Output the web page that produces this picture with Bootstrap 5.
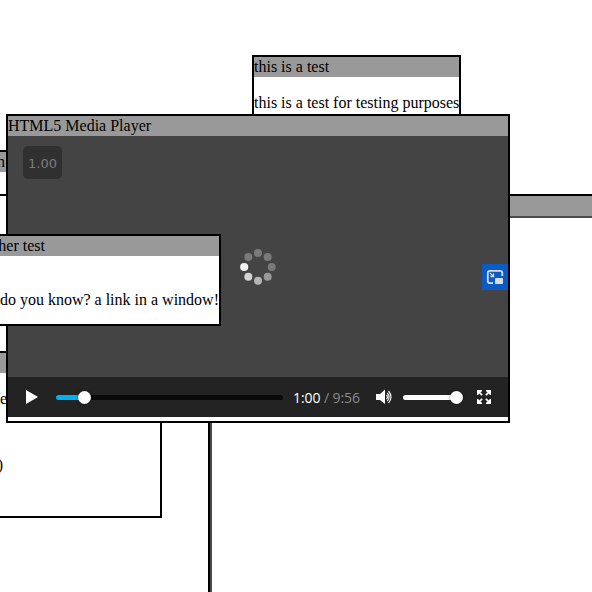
<!DOCTYPE html>
<html lang="en">
<head>
<meta charset="utf-8">
<meta name="viewport" content="width=device-width, initial-scale=1">
<title>Windows</title>
<link href="https://cdn.jsdelivr.net/npm/bootstrap@5.3.0/dist/css/bootstrap.min.css" rel="stylesheet">
<style>
body{font:16px/20px "Liberation Serif","Times New Roman",serif;color:#000;background:#fff}
.desk{width:592px;height:592px}
.win{position:absolute;border:2px solid #000;background:#fff;white-space:nowrap}
.win-title{background:#999;height:20px;line-height:20px}
.w-side{left:-200px;top:150px;width:208px;height:46px}
.w-side .win-title{padding-right:1px}
.w-frame{left:208px;top:194px;width:600px;height:600px}
.frame-body{border:2px solid #4c4c4c;height:576px}
.w-test{left:252px;top:55px;width:209px;height:90px}
.w-low{left:-238px;top:351px;width:400px;height:167px}
.w-player{left:6px;top:114px;width:504px;height:309px}
.w-link{left:-179px;top:234px;width:400px;height:92px}
.video{height:241px;background:#444;padding:10px 0 0 15px}
.speed{width:39px;height:33px;border-radius:5px;background:#303030;color:#7c7c7c;font:13px/35px "DejaVu Sans",sans-serif}
.spinner-dots{position:absolute;left:230px;top:130px}
.pip{position:absolute;right:0;top:148px;width:26px;height:26px;background:#0b5bc4}
.controls{height:40px;background:#232323;font:14px/40px "Open Sans","Noto Sans",sans-serif;color:#fff;padding-left:18px}
.track{height:5px;border-radius:3px;background:#0a0a0a}
.seek{width:227px;margin-left:18px}
.seek-fill{height:5px;border-radius:3px;background:#00b3f0}
.knob{width:13px;height:13px;border-radius:50%;background:#fff;margin-left:-7px;box-shadow:0 0 3px #0008}
.time{width:67px;margin-left:10px;letter-spacing:-.08px;padding-top:1px}
.total{color:#8b8b8b}
.volume{width:60px;margin-left:10px}
.vol-fill{width:54px;height:5px;border-radius:3px;background:#fff}
</style>
</head>
<body>
<main class="desk position-relative overflow-hidden">
  <section class="win w-side"><div class="win-title text-end">an</div></section>
  <section class="win w-frame"><div class="win-title"></div><div class="frame-body"></div></section>
  <section class="win w-test"><div class="win-title">this is a test</div><p class="m-0 pt-3">this is a test for testing purposes</p></section>
  <section class="win w-low">
    <div class="win-title"></div>
    <p class="m-0 text-end" style="padding:16px 153px 0 0">safe</p>
    <p class="m-0 text-end" style="padding:46px 157px 0 0">:)</p>
  </section>
  <section class="win w-player">
    <div class="win-title">HTML5 Media Player</div>
    <div class="video">
      <div class="speed text-center">1.00</div>
      <svg class="spinner-dots" width="40" height="40" viewBox="0 0 40 40">
        <circle cx="20" cy="7" r="4" fill="#7a7a7a"/><circle cx="29.7" cy="11" r="4" fill="#7a7a7a"/>
        <circle cx="33.7" cy="21" r="4" fill="#7a7a7a"/><circle cx="29.7" cy="30.7" r="4" fill="#999"/>
        <circle cx="20" cy="34.7" r="4" fill="#b5b5b5"/><circle cx="10.3" cy="30.7" r="4" fill="#d4d4d4"/>
        <circle cx="6.2" cy="21" r="4.1" fill="#f2f2f2"/><circle cx="10.3" cy="11" r="4" fill="#7a7a7a"/>
      </svg>
      <svg class="pip" viewBox="0 0 26 26"><path d="M20.300 12V9Q20.300 6.800 18 6.800H8Q5.800 6.800 5.800 9V17Q5.800 19.200 8 19.200H11" fill="none" stroke="#dadde2" stroke-width="1.800"/><path d="M8 9L11 12M11.500 9.500V12.500H8.500" fill="none" stroke="#dadde2" stroke-width="1.300"/><rect x="13" y="14" width="8" height="6" rx=".8" fill="#dadde2"/></svg>
    </div>
    <div class="controls d-flex align-items-center">
      <svg width="12" height="14" viewBox="0 0 12 14"><path d="M0 0L12 7L0 14Z" fill="#fff"/></svg>
      <div class="track seek d-flex align-items-center"><div class="seek-fill" style="width:29px"></div><div class="knob"></div></div>
      <div class="time">1:00<span class="total"> / 9:56</span></div>
      <svg class="ms-3" width="17" height="16" viewBox="0 0 17 16"><path d="M0 5H4L9 .5V15L4 11H0Z" fill="#fff"/><path d="M10.500 6Q12.500 8 10.500 10M11.200 3.800Q15 8 11.200 12.200M12.500 2Q17.500 8 12.500 14" fill="none" stroke="#eee" stroke-width="1.200"/></svg>
      <div class="volume d-flex align-items-center"><div class="vol-fill"></div><div class="knob"></div></div>
      <svg width="14" height="14" viewBox="0 0 14 14" fill="#fff" style="margin-left:14px"><path id="arrow" d="M0 0H5V1.200L3.400 2.200L5.700 4.500L4.500 5.700L2.200 3.400L1.200 5H0Z"/><use href="#arrow" transform="matrix(-1 0 0 1 14 0)"/><use href="#arrow" transform="matrix(1 0 0 -1 0 14)"/><use href="#arrow" transform="rotate(180 7 7)"/></svg>
    </div>
  </section>
  <section class="win w-link">
    <div class="win-title text-end" style="padding-right:174px">another test</div>
    <p class="m-0 text-end" style="padding-top:34px">what do you know? a link in a window!</p>
  </section>
</main>
<script src="https://cdn.jsdelivr.net/npm/bootstrap@5.3.0/dist/js/bootstrap.bundle.min.js"></script>
</body>
</html>
